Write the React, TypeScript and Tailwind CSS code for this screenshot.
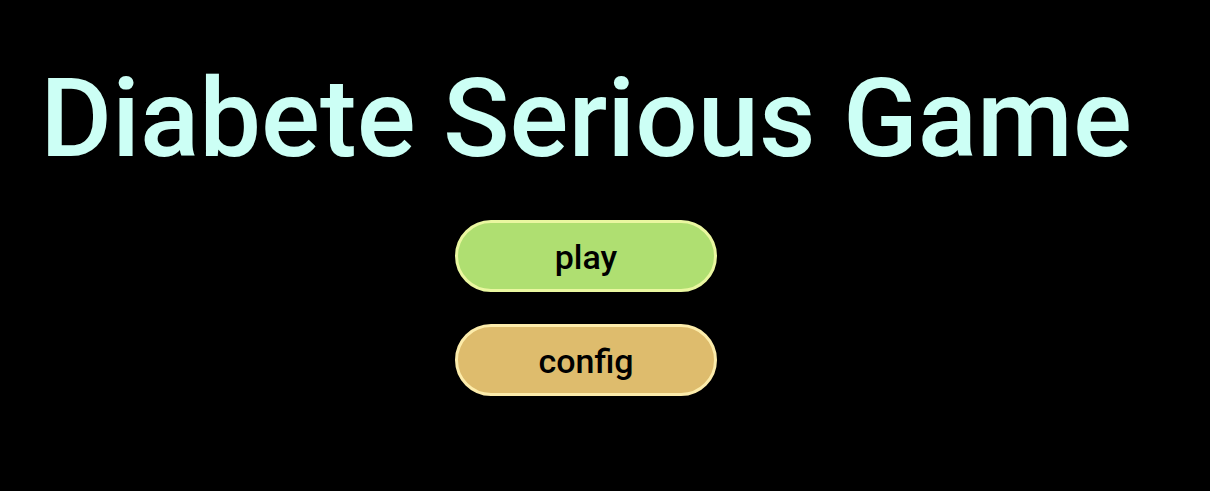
export default function App() {
  return (
    <div className="min-h-screen w-full bg-black font-['Roboto',sans-serif]">
      <div className="flex w-[1172px] flex-col items-center pt-[64px]">
        <h1 className="text-[110px] leading-none font-medium text-[#ccfff5] whitespace-nowrap">
          Diabete Serious Game
        </h1>
        <div className="mt-[46px] flex flex-col items-center gap-[32px]">
          <button className="h-[72px] w-[262px] rounded-full border-[3px] border-[#eaf7a0] bg-[#afdf71] pt-[3px] text-[34px] font-medium text-black">
            play
          </button>
          <button className="h-[72px] w-[262px] rounded-full border-[3px] border-[#fcecab] bg-[#debc6d] pt-[3px] text-[34px] font-medium text-black">
            config
          </button>
        </div>
      </div>
    </div>
  );
}
